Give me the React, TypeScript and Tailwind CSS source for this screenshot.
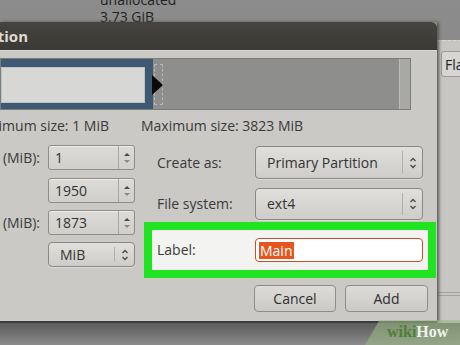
import React from "react";

function SpinArrows() {
  return (
    <svg width="8" height="14" viewBox="0 0 8 14">
      <path d="M1 5 L4 2 L7 5 Z" fill="#4a4a4a" />
      <path d="M1 9 L4 12 L7 9 Z" fill="#8a8a8a" />
    </svg>
  );
}

function ComboArrows() {
  return (
    <svg width="8" height="14" viewBox="0 0 8 14">
      <path d="M1.5 5 L4 2.5 L6.5 5" fill="none" stroke="#4a4a4a" strokeWidth="1.3" />
      <path d="M1.5 9 L4 11.5 L6.5 9" fill="none" stroke="#4a4a4a" strokeWidth="1.3" />
    </svg>
  );
}

function SpinBox({ value }: { value: string }) {
  return (
    <div className="w-[87px] h-[25px] flex rounded-[3px] border border-[#8e8d89] bg-gradient-to-b from-[#dcdbd7] to-[#d0cfcb] shadow-[inset_0_1px_0_#ecebe8]">
      <div className="flex-1 pl-[6px] flex items-center text-[14px] text-[#333]">{value}</div>
      <div className="w-[16px] border-l border-[#a9a8a4] flex items-center justify-center">
        <SpinArrows />
      </div>
    </div>
  );
}

function Combo({ value, className }: { value: string; className: string }) {
  return (
    <div className={`flex rounded-[4px] border border-[#8a8985] bg-gradient-to-b from-[#e0dfdb] to-[#cecdc9] shadow-[0_1px_0_#dcdbd7] ${className}`}>
      <div className="flex-1 pl-[11px] flex items-center text-[14px] text-[#333]">{value}</div>
      <div className="w-[20px] my-[4px] border-l border-[#b0afab] flex items-center justify-center">
        <ComboArrows />
      </div>
    </div>
  );
}

function CutLabel({ text, width }: { text: string; width: string }) {
  return (
    <div className={`${width} flex justify-end overflow-hidden whitespace-nowrap`}>
      <span>{text}</span>
    </div>
  );
}

export default function App() {
  return (
    <div className="relative w-[460px] h-[345px] overflow-hidden bg-gradient-to-b from-[#8c8c8c] to-[#838383] font-['Open_Sans',sans-serif] text-[#3a3a3a]">
      {/* desktop behind */}
      <div className="absolute left-[100px] top-[-9px] text-[14px] leading-[17px] text-[#1f1f1f]">
        <div>unallocated</div>
        <div>3.73 GiB</div>
      </div>

      {/* window on the right */}
      <div className="absolute left-[437px] top-[40px] w-[30px] h-[284px] bg-[#c7c6c2] border-t border-dashed border-[#dcdbd6]">
        <div className="mt-[10px] ml-[4px] h-[26px] border border-[#9a9995] rounded-l-[3px] bg-[#d6d5d1] pl-[3px] flex items-center text-[14px] text-[#222]">
          Fla
        </div>
        <div className="mt-[215px] border-t border-[#a2a19d] h-[4px] border-b" />
      </div>

      {/* dialog */}
      <div className="absolute left-0 top-[22px] w-[437px] h-[301px] flex flex-col shadow-[2px_0_3px_#555]">
        <div className="h-[28px] bg-gradient-to-b from-[#45443f] to-[#3a3935] rounded-tr-[6px] flex items-center text-[15px] font-bold text-[#dfdbd2]">
          <CutLabel text="Create new Partition" width="w-[28px]" />
        </div>
        <div className="flex-1 bg-[#cac9c5] border-t border-[#d8d7d3] border-b-2 border-b-[#3c3c3c] pt-[7px] text-[14px] leading-[16px]">
          {/* partition bar */}
          <div className="relative w-[411px] h-[52px] flex border border-[#7d7c78] bg-[#8e8e8d]">
            <div className="w-[152px] bg-[#3d5a72] pt-[8px] pb-[6px] pr-[8px]">
              <div className="h-full bg-[#d7d7d5] border border-[#b9c3cc]" />
            </div>
            <div className="flex-1" />
            <div className="w-[11px] bg-[#a8a8a5] border-l border-[#bcbcb8]" />
            <div className="absolute left-[153px] top-[5px] w-[9px] h-[41px] border border-dashed border-[#b8b8b6]" />
            <svg className="absolute left-[151px] top-[16px]" width="11" height="20" viewBox="0 0 11 20">
              <path d="M0 0 L11 10 L0 20 Z" fill="#0a0a0a" />
            </svg>
          </div>

          {/* min / max */}
          <div className="mt-[8px] flex whitespace-nowrap">
            <CutLabel text="Minimum size: 1 MiB" width="w-[109px]" />
            <span className="ml-[32px]">Maximum size: 3823 MiB</span>
          </div>

          <div className="mt-[11px] flex">
            {/* left column */}
            <div className="w-[136px] flex flex-col">
              <div className="flex items-center h-[25px]">
                <CutLabel text="Free space preceding (MiB):" width="w-[40px]" />
                <div className="ml-[8px]"><SpinBox value="1" /></div>
              </div>
              <div className="flex items-center h-[25px] mt-[8px]">
                <div className="w-[40px]" />
                <div className="ml-[8px]"><SpinBox value="1950" /></div>
              </div>
              <div className="flex items-center h-[25px] mt-[7px]">
                <CutLabel text="Free space following (MiB):" width="w-[40px]" />
                <div className="ml-[8px]"><SpinBox value="1873" /></div>
              </div>
              <div className="flex items-center h-[25px] mt-[7px]">
                <div className="w-[40px]" />
                <Combo value="MiB" className="ml-[8px] w-[87px] h-[25px]" />
              </div>
            </div>

            {/* right column */}
            <div className="ml-[8px] w-[292px] flex flex-col">
              <div className="mt-[1px] h-[33px] flex items-center pl-[13px]">
                <span className="w-[98px]">Create as:</span>
                <Combo value="Primary Partition" className="w-[168px] h-[33px]" />
              </div>
              <div className="mt-[9px] h-[32px] flex items-center pl-[13px]">
                <span className="w-[98px]">File system:</span>
                <Combo value="ext4" className="w-[168px] h-[32px]" />
              </div>
              <div className="mt-[2px] h-[56px] border-[8px] border-[#1fe41f] bg-[#f3f3f1] flex items-center pl-[5px]">
                <span className="w-[98px]">Label:</span>
                <div className="w-[168px] h-[24px] rounded-[4px] border border-[#c4512c] bg-white flex items-center pl-[3px]">
                  <span className="bg-[#e4561f] text-white px-[1px] leading-[17px]">Main</span>
                </div>
              </div>
              <div className="mt-[7px] flex pl-[110px] gap-[9px]">
                <button className="w-[82px] h-[27px] rounded-[4px] border border-[#8e8d89] bg-gradient-to-b from-[#dcdbd7] to-[#cbcac6] text-[14px] text-[#2e2e2e]">
                  Cancel
                </button>
                <button className="w-[83px] h-[27px] rounded-[4px] border border-[#8e8d89] bg-gradient-to-b from-[#dcdbd7] to-[#cbcac6] text-[14px] text-[#2e2e2e]">
                  Add
                </button>
              </div>
            </div>
          </div>
        </div>
      </div>

      {/* bottom shadow */}
      <div className="absolute left-0 top-[323px] w-[460px] h-[22px] bg-gradient-to-b from-[#5c5c5c] to-[#8b8b8b]" />

      {/* wikiHow */}
      <div className="absolute left-[372px] top-[320px] w-[110px] h-[26px] bg-[#9ab685]/60 -skew-x-[30deg]" />
      <div className="absolute left-[387px] top-[322px] font-['Liberation_Serif',serif] font-bold text-[16px] leading-[20px]">
        <span className="text-[#4f7f36]">wiki</span>
        <span className="text-[#eef3e8]">How</span>
      </div>
    </div>
  );
}
